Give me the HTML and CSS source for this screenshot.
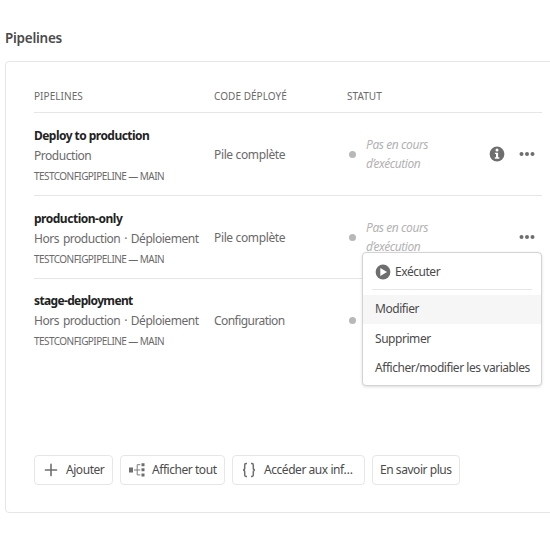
FILE: index.html
```html
<!DOCTYPE html>
<html lang="fr">
<head>
<meta charset="utf-8">
<title>Pipelines</title>
<link rel="stylesheet" href="styles.css">
</head>
<body>
<h2 class="title">Pipelines</h2>
<section class="card">
  <div class="row head">
    <span>PIPELINES</span><span class="h-code">CODE DÉPLOYÉ</span><span class="h-status">STATUT</span>
  </div>
  <div class="row item">
    <div class="pipeline">
      <div class="name">Deploy to production</div>
      <div class="kind">Production</div>
      <div class="branch">TESTCONFIGPIPELINE — MAIN</div>
    </div>
    <div class="code">Pile complète</div>
    <div class="status"><i class="dot"></i><em>Pas en cours<br>d’exécution</em></div>
    <div class="actions">
      <svg class="info" width="16" height="16" viewBox="0 0 16 16"><circle cx="8" cy="8" r="7.4" fill="#6e6e6e"/><circle cx="8" cy="4.1" r="1.5" fill="#fff"/><path d="M5.9 6.7h3.2v4.5h1.2v1.5H5.8v-1.5H7V8.1H5.9z" fill="#fff"/></svg>
      <svg width="16" height="16" viewBox="0 0 16 16" fill="#6e6e6e"><circle cx="2.5" cy="8" r="2"/><circle cx="8" cy="8" r="2"/><circle cx="13.5" cy="8" r="2"/></svg>
    </div>
  </div>
  <div class="row item">
    <div class="pipeline">
      <div class="name only">production-only</div>
      <div class="kind">Hors production · Déploiement</div>
      <div class="branch">TESTCONFIGPIPELINE — MAIN</div>
    </div>
    <div class="code">Pile complète</div>
    <div class="status"><i class="dot"></i><em>Pas en cours<br>d’exécution</em></div>
    <div class="actions">
      <svg width="16" height="16" viewBox="0 0 16 16" fill="#6e6e6e"><circle cx="2.5" cy="8" r="2"/><circle cx="8" cy="8" r="2"/><circle cx="13.5" cy="8" r="2"/></svg>
      <div class="menu">
        <div class="option run"><svg width="16" height="16" viewBox="0 0 16 16"><circle cx="8" cy="8" r="7.4" fill="#6e6e6e"/><path d="M5.3 3.9v8.2L12 8z" fill="#fff"/></svg><span>Exécuter</span></div>
        <div class="divider"></div>
        <div class="option active"><span>Modifier</span></div>
        <div class="option"><span>Supprimer</span></div>
        <div class="option"><span class="long">Afficher/modifier les variables</span></div>
      </div>
    </div>
  </div>
  <div class="row item last">
    <div class="pipeline">
      <div class="name stage">stage-deployment</div>
      <div class="kind">Hors production · Déploiement</div>
      <div class="branch">TESTCONFIGPIPELINE — MAIN</div>
    </div>
    <div class="code config">Configuration</div>
    <div class="status"><i class="dot"></i></div>
    <div class="actions"></div>
  </div>
  <div class="buttons">
    <button class="b-add"><svg width="16" height="16" viewBox="0 0 16 16"><path d="M8 2.4v11.2M2.4 8h11.2" stroke="#6e6e6e" stroke-width="1.6" stroke-linecap="round"/></svg><span>Ajouter</span></button>
    <button class="b-all"><svg width="16" height="16" viewBox="0 0 16 16"><g fill="#6e6e6e"><path d="M0 5.6h4v4.8H0zM12.5 1.2h3v3h-3zM12.5 6.3h3v3h-3zM12.5 11.4h3v3h-3z"/></g><path d="M5 8h6.3M11.3 2.7H8.2v10.2h3.1" fill="none" stroke="#7c7c7c"/></svg><span>Afficher tout</span></button>
    <button class="b-info"><svg width="16" height="16" viewBox="0 0 16 16"><path d="M6 1.6H5Q3.7 1.6 3.7 3v3Q3.7 8 2 8q1.7 0 1.7 2v3q0 1.4 1.3 1.4h1M10 1.6h1q1.3 0 1.3 1.4v3q0 2 1.7 2-1.7 0-1.7 2v3q0 1.4-1.3 1.4h-1" fill="none" stroke="#6e6e6e" stroke-width="1.5"/></svg><span>Accéder aux inf…</span></button>
    <button class="b-more"><span>En savoir plus</span></button>
  </div>
</section>
</body>
</html>
```
FILE: styles.css
```css
* { box-sizing: border-box; }
body { margin: 0; height: 547px; overflow: hidden; background: #fff; color: #6a6a6a; font: 12px/20px "Noto Sans", "Open Sans", sans-serif; white-space: nowrap; }
.title { margin: 0; padding: 28px 0 0 5px; height: 61px; font-size: 13.5px; font-weight: 600; line-height: 20px; color: #4b4b4b; letter-spacing: -.25px; }
.card { margin-left: 5px; width: 560px; height: 452px; border: 1.5px solid #e6e6e6; border-radius: 4px; padding: 0 0 0 28px; }
.row { display: grid; grid-template-columns: 180px 133px 138px 57px; width: 508px; border-bottom: 1px solid #e6e6e6; }
.head { height: 51px; padding-top: 24px; font-size: 10px; letter-spacing: .05px; line-height: 20px; }
.item { height: 83px; align-items: center; }
.last { border: 0; }
.name { font-weight: 700; color: #222; letter-spacing: -.54px; }
.only { letter-spacing: -.48px; }
.stage { letter-spacing: -.64px; }
.kind { letter-spacing: -.46px; word-spacing: 1.2px; }
.branch { font-size: 10px; line-height: 21px; letter-spacing: -.55px; }
.pipeline { padding-top: 4px; }
.last .pipeline { padding-top: 2px; }
.code { letter-spacing: -.36px; padding-top: 2px; }
.config { letter-spacing: -.55px; padding-top: 0; }
.status { display: flex; align-items: center; gap: 10px; padding-left: 2px; }
.status em { line-height: 19px; color: #b3b3b3; letter-spacing: -.42px; }
.dot { width: 7px; height: 7px; border-radius: 50%; background: #b8b8b8; }
.actions { position: relative; display: flex; justify-content: flex-end; gap: 14px; padding-right: 7px; }
svg { display: block; flex: none; }
.menu { position: absolute; z-index: 2; top: 23px; right: 0; width: 180px; height: 134px; padding-top: 4px; background: #fff; border: 1px solid #d3d3d3; border-radius: 4px; box-shadow: 0 1px 3px rgba(0,0,0,.14); color: #4b4b4b; letter-spacing: -.45px; }
.option { height: 29.5px; padding-left: 12px; display: flex; align-items: center; gap: 4px; }
.divider { height: 1px; margin: 2px 9px 5px; background: #e6e6e6; }
.active { background: #f6f6f6; }
.buttons { display: flex; margin-top: 93px; gap: 7px; }
button { display: flex; align-items: center; gap: 7px; height: 30px; padding: 0 0 0 8px; border: 1px solid #e6e6e6; border-radius: 4px; background: #fff; color: #4b4b4b; font: inherit; letter-spacing: -.45px; white-space: nowrap; }
.b-add { width: 79px; }
.b-all { width: 105px; }
.b-info { width: 133px; }
.b-more { width: 88px; padding-left: 7px; }
```
